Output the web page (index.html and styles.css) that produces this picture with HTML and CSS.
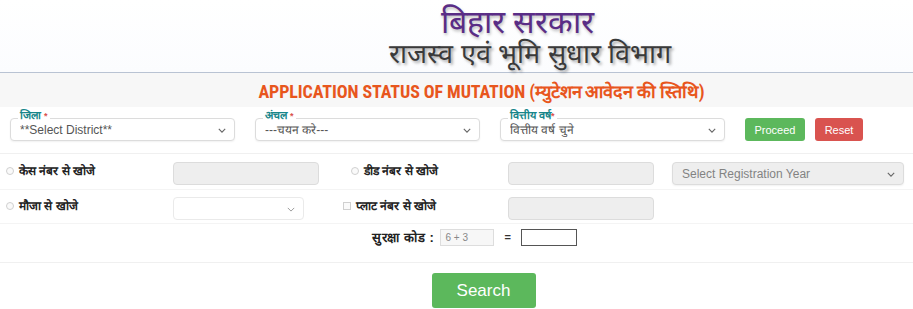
FILE: index.html
```html
<!DOCTYPE html>
<html lang="hi">
<head>
    <meta charset="UTF-8">
    <meta name="viewport" content="width=device-width, initial-scale=1.0">
    <title>Application Status of Mutation</title>
    <link rel="stylesheet" href="styles.css">
</head>
<body>
    <div class="header">
        <div class="header-line1">बिहार सरकार</div>
        <div class="header-line2">राजस्व एवं भूमि सुधार विभाग</div>
    </div>

    <div class="title-bar">APPLICATION STATUS OF MUTATION (म्युटेशन आवेदन की स्तिथि)</div>

    <div class="filter-row">
        <div class="field">
            <span class="legend">जिला <b>*</b></span>
            <div class="select-box">
                <select><option>**Select District**</option></select>
                <svg class="chev" viewBox="0 0 10 6"><path d="M1 1l4 4 4-4" fill="none" stroke="#666" stroke-width="1.4"/></svg>
            </div>
        </div>
        <div class="field">
            <span class="legend">अंचल <b>*</b></span>
            <div class="select-box">
                <select><option>---चयन करे---</option></select>
                <svg class="chev" viewBox="0 0 10 6"><path d="M1 1l4 4 4-4" fill="none" stroke="#666" stroke-width="1.4"/></svg>
            </div>
        </div>
        <div class="field">
            <span class="legend">वित्तीय वर्ष<b>*</b></span>
            <div class="select-box">
                <select><option>वित्तीय वर्ष चुने</option></select>
                <svg class="chev" viewBox="0 0 10 6"><path d="M1 1l4 4 4-4" fill="none" stroke="#666" stroke-width="1.4"/></svg>
            </div>
        </div>
        <button class="btn btn-green">Proceed</button>
        <button class="btn btn-red">Reset</button>
    </div>

    <div class="search-grid row-top">
        <label class="opt"><input type="radio" name="mode"> केस नंबर से खोजे</label>
        <input class="text-in disabled" type="text" disabled>
        <label class="opt opt-pad"><input type="radio" name="mode"> डीड नंबर से खोजे</label>
        <input class="text-in disabled shift-left" type="text" disabled>
        <div class="select-box grey shift-left">
            <select disabled><option>Select Registration Year</option></select>
            <svg class="chev" viewBox="0 0 10 6"><path d="M1 1l4 4 4-4" fill="none" stroke="#666" stroke-width="1.4"/></svg>
        </div>
    </div>

    <div class="search-grid row-bottom">
        <label class="opt"><input type="radio" name="mode"> मौजा से खोजे</label>
        <div class="select-box small">
            <select><option></option></select>
            <svg class="chev" viewBox="0 0 10 6"><path d="M1 1l4 4 4-4" fill="none" stroke="#999" stroke-width="1.2"/></svg>
        </div>
        <label class="opt"><input type="checkbox"> प्लाट नंबर से खोजे</label>
        <input class="text-in disabled" type="text" disabled>
    </div>

    <div class="captcha-row">
        <span class="captcha-label">सुरक्षा कोड :</span>
        <input class="captcha-code" type="text" value="6 + 3" readonly>
        <span class="eq">=</span>
        <input class="captcha-answer" type="text">
    </div>

    <div class="search-row">
        <button class="btn btn-green btn-big">Search</button>
    </div>
</body>
</html>
```

FILE: styles.css
```css
body {
    margin: 0;
    background-color: #ffffff;
    font-family: "Liberation Sans", Arial, sans-serif;
    color: #333;
}
.header {
    height: 72px;
    padding-left: 122px;
    text-align: center;
    border-bottom: 1px solid #b9c3d3;
    background: linear-gradient(#ffffff, #fbfcfe);
}
.header-line1 {
    padding-top: 5px;
    font-size: 32px;
    line-height: 34px;
    color: #5a2d86;
    text-shadow: 1px 2px 3px rgba(0,0,0,0.25);
}
.header-line2 {
    padding-left: 26px;
    font-size: 27px;
    line-height: 31px;
    color: #3a3a3a;
    text-shadow: 2px 2px 3px rgba(0,0,0,0.35);
}
.title-bar {
    height: 34px;
    line-height: 38px;
    padding-left: 50px;
    background-color: #f7f7f7;
    text-align: center;
    color: #e8561d;
    font-family: "Liberation Sans Narrow", "Roboto Condensed", "Liberation Sans", sans-serif;
    font-weight: bold;
    font-size: 18px;
    letter-spacing: -0.1px;
}
.filter-row {
    display: flex;
    align-items: center;
    gap: 20px;
    padding: 11px 0 12px 10px;
    border-bottom: 1px solid #f0f0f0;
}
.field {
    position: relative;
    width: 225px;
}
.legend {
    position: absolute;
    top: -9px;
    left: 8px;
    padding: 0 2px;
    background-color: #fff;
    color: #17868a;
    font-size: 11px;
    font-weight: bold;
    line-height: 12px;
    z-index: 2;
}
.legend b {
    color: #d9534f;
    font-size: 9px;
}
.select-box {
    position: relative;
    height: 23px;
    border: 1px solid #dcdcdc;
    border-radius: 4px;
    box-shadow: 0 1px 2px rgba(0,0,0,0.06);
    background-color: #fff;
    box-sizing: border-box;
}
.select-box select {
    appearance: none;
    -webkit-appearance: none;
    width: 100%;
    height: 100%;
    border: none;
    background: transparent;
    padding: 0 20px 0 9px;
    font-family: "Liberation Sans", Arial, sans-serif;
    font-size: 12px;
    color: #555;
    outline: none;
}
.chev {
    position: absolute;
    right: 8px;
    top: 9px;
    width: 8px;
    height: 5px;
    pointer-events: none;
}
.btn {
    border: none;
    border-radius: 3px;
    color: #fff;
    font-family: "Liberation Sans", Arial, sans-serif;
    font-size: 11px;
    height: 23px;
    cursor: pointer;
}
.btn-green {
    background-color: #5cb85c;
    width: 60px;
}
.btn-red {
    background-color: #d9534f;
    width: 48px;
    margin-left: -10px;
}
.search-grid {
    display: grid;
    grid-template-columns: 167px 170px 165px 166px 230px;
    align-items: center;
    padding: 4px 0 5px 6px;
    border-bottom: 1px solid #f4f4f4;
}
.row-top {
    padding-top: 8px;
    padding-bottom: 4px;
}
.row-bottom {
    padding-top: 7px;
    padding-bottom: 3px;
}
.shift-left {
    margin-left: -2px;
}
.opt {
    display: flex;
    align-items: center;
    gap: 5px;
    font-size: 12px;
    font-weight: bold;
    color: #222;
    margin-top: -6px;
}
.opt-pad {
    padding-left: 8px;
}
.opt input {
    appearance: none;
    -webkit-appearance: none;
    width: 8px;
    height: 8px;
    margin: 0;
    border: 1px solid #d0d0d0;
    background-color: #fafafa;
}
.opt input[type="radio"] {
    border-radius: 50%;
}
.text-in {
    width: 146px;
    height: 23px;
    box-sizing: border-box;
    border: 1px solid #dcdcdc;
    border-radius: 4px;
    margin: 0;
}
.disabled {
    background-color: #eeeeee;
}
.select-box.grey {
    background-color: #eeeeee;
}
.select-box.grey select {
    color: #555;
}
.select-box.small {
    width: 131px;
    border-color: #eaeaea;
    box-shadow: none;
}
.captcha-row {
    display: flex;
    align-items: center;
    justify-content: center;
    gap: 6px;
    padding: 4px 0 16px 36px;
    border-bottom: 1px solid #f0f0f0;
}
.captcha-label {
    font-size: 13px;
    font-weight: bold;
    letter-spacing: 0.6px;
    color: #222;
}
.captcha-code {
    width: 54px;
    height: 17px;
    box-sizing: border-box;
    border: 1px solid #ddd;
    background-color: #f7f7f7;
    color: #888;
    font-size: 10px;
    padding: 0 4px;
}
.eq {
    font-size: 11px;
    font-weight: bold;
    margin: 0 4px;
}
.captcha-answer {
    width: 56px;
    height: 17px;
    box-sizing: border-box;
    border: 1px solid #555;
}
.search-row {
    display: flex;
    justify-content: center;
    padding: 10px 0 0 54px;
}
.btn-big {
    width: 104px;
    height: 35px;
    font-size: 17px;
}
```
